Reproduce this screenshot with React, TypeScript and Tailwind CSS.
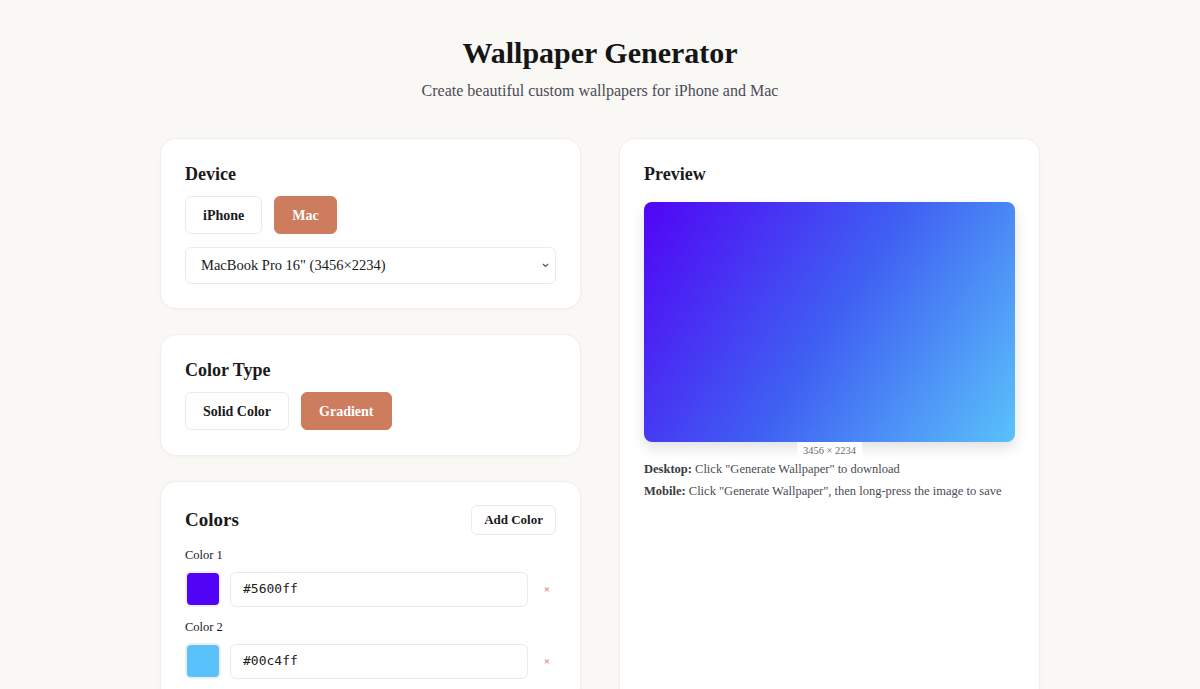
import React, { useState } from "react";

type ColorItem = { id: number; hex: string; shown: string };

const serif = { fontFamily: '"Liberation Serif", "DejaVu Serif", serif' };

function ToggleButton({ active, children, onClick }: { active: boolean; children: React.ReactNode; onClick: () => void }) {
  return (
    <button
      onClick={onClick}
      className={
        active
          ? "h-[38px] px-[17px] rounded-md bg-[#cd7c5e] text-white text-[14px] font-semibold border border-[#cd7c5e]"
          : "h-[38px] px-[17px] rounded-md bg-white text-[#1a1a1a] text-[14px] font-semibold border border-[#ecebe8]"
      }
    >
      {children}
    </button>
  );
}

function Card({ children, className = "" }: { children: React.ReactNode; className?: string }) {
  return (
    <div className={"bg-white rounded-2xl border border-[#f1efec] shadow-[0_1px_3px_rgba(0,0,0,0.03)] px-6 " + className}>
      {children}
    </div>
  );
}

export default function App() {
  const [device, setDevice] = useState<"iphone" | "mac">("mac");
  const [colorType, setColorType] = useState<"solid" | "gradient">("gradient");
  const [colors, setColors] = useState<ColorItem[]>([
    { id: 1, hex: "#5600ff", shown: "#5104f5" },
    { id: 2, hex: "#00c4ff", shown: "#5ac2fa" },
  ]);

  const removeColor = (id: number) => setColors(colors.filter((c) => c.id !== id));
  const addColor = () =>
    setColors([...colors, { id: Date.now(), hex: "#ffffff", shown: "#ffffff" }]);

  return (
    <div className="min-h-screen bg-[#f9f8f5] text-[#1a1a1a]" style={serif}>
      <div className="max-w-[880px] mx-auto pt-[34px]">
        <h1 className="text-center text-[30px] font-bold leading-[38px] text-[#151515]">Wallpaper Generator</h1>
        <p className="text-center text-[16px] text-[#4b4b55] mt-[9px] leading-5">
          Create beautiful custom wallpapers for iPhone and Mac
        </p>

        <div className="grid grid-cols-2 gap-[38px] mt-[37px]">
          <div className="flex flex-col gap-[25px]">
            <Card className="pt-[23px] pb-[24px]">
              <h2 className="text-[18px] font-bold leading-6">Device</h2>
              <div className="flex gap-[12px] mt-[10px]">
                <ToggleButton active={device === "iphone"} onClick={() => setDevice("iphone")}>
                  iPhone
                </ToggleButton>
                <ToggleButton active={device === "mac"} onClick={() => setDevice("mac")}>
                  Mac
                </ToggleButton>
              </div>
              <div className="relative mt-[13px]">
                <div className="h-[37px] rounded-md border border-[#ecebe8] bg-white flex items-center px-[15px] text-[14.5px]">
                  MacBook Pro 16" (3456×2234)
                </div>
                <svg className="absolute right-[7px] top-[16px]" width="7" height="5" viewBox="0 0 7 5" fill="none">
                  <path d="M1 1l2.5 2.5L6 1" stroke="#555" strokeWidth="1.2" />
                </svg>
              </div>
            </Card>

            <Card className="pt-[23px] pb-[25px]">
              <h2 className="text-[18px] font-bold leading-6">Color Type</h2>
              <div className="flex gap-[12px] mt-[10px]">
                <ToggleButton active={colorType === "solid"} onClick={() => setColorType("solid")}>
                  Solid Color
                </ToggleButton>
                <ToggleButton active={colorType === "gradient"} onClick={() => setColorType("gradient")}>
                  Gradient
                </ToggleButton>
              </div>
            </Card>

            <Card className="pt-[23px] pb-[24px]">
              <div className="flex items-center justify-between">
                <h2 className="text-[19px] font-bold leading-6">Colors</h2>
                <button
                  onClick={addColor}
                  className="h-[30px] px-[12px] rounded-md border border-[#ecebe8] bg-white text-[13px] font-semibold"
                >
                  Add Color
                </button>
              </div>
              <div className="flex flex-col gap-[12px] mt-[12px]">
                {colors.map((c, i) => (
                  <div key={c.id}>
                    <div className="text-[12.5px] leading-4 font-medium">Color {i + 1}</div>
                    <div className="flex items-center mt-[8px]">
                      <div
                        className="w-[36px] h-[36px] rounded-md border-2 border-[#f0eef0] shrink-0"
                        style={{ backgroundColor: c.shown }}
                      />
                      <div
                        className="ml-[9px] flex-1 h-[35px] rounded-md border border-[#ecebe8] flex items-center px-[12px] text-[13px] text-[#222]"
                        style={{ fontFamily: '"DejaVu Sans Mono", "Liberation Mono", monospace' }}
                      >
                        {c.hex}
                      </div>
                      <button
                        onClick={() => removeColor(c.id)}
                        className="w-[28px] text-right pr-[6px] text-[#d9534f] text-[11px] leading-none"
                      >
                        ×
                      </button>
                    </div>
                  </div>
                ))}
              </div>
            </Card>
          </div>

          <div>
            <Card className="pt-[23px] pb-[300px]">
              <h2 className="text-[18px] font-bold leading-6">Preview</h2>
              <div className="relative mt-[16px]">
                <div className="w-full aspect-[3456/2234] rounded-lg bg-[linear-gradient(123deg,#5104f5_0%,#3f5ff2_50%,#5ac2fa_100%)] shadow-[0_6px_14px_rgba(0,0,0,0.12)]" />
                <div className="absolute left-1/2 -translate-x-1/2 -bottom-[18px] bg-white px-[6px] h-[18px] flex items-center text-[10.5px] text-[#6b6b70]">
                  3456 × 2234
                </div>
              </div>
              <div className="mt-[19px] text-[12.5px] text-[#4b4b55] leading-4 flex flex-col gap-[6px]">
                <p>
                  <span className="font-bold text-[#3a3a40]">Desktop:</span> Click "Generate Wallpaper" to download
                </p>
                <p>
                  <span className="font-bold text-[#3a3a40]">Mobile:</span> Click "Generate Wallpaper", then long-press the image to save
                </p>
              </div>
            </Card>
          </div>
        </div>
      </div>
    </div>
  );
}
